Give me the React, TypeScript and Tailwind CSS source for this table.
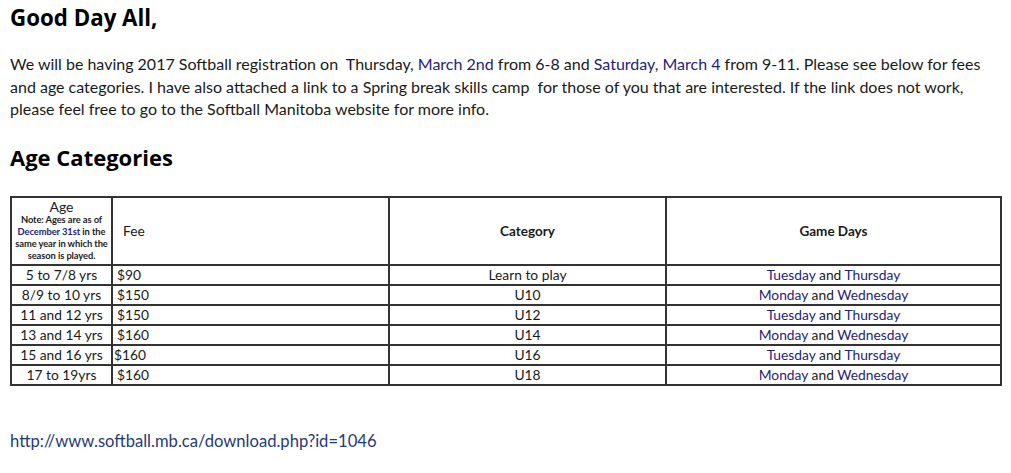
const rows = [
  { age: "5 to 7/8 yrs", fee: "$90", cat: "Learn to play", a: "Tuesday", b: "Thursday", tight: false },
  { age: "8/9 to 10 yrs", fee: "$150", cat: "U10", a: "Monday", b: "Wednesday", tight: false },
  { age: "11 and 12 yrs", fee: "$150", cat: "U12", a: "Tuesday", b: "Thursday", tight: false },
  { age: "13 and 14 yrs", fee: "$160", cat: "U14", a: "Monday", b: "Wednesday", tight: false },
  { age: "15 and 16 yrs", fee: "$160", cat: "U16", a: "Tuesday", b: "Thursday", tight: true },
  { age: "17 to 19yrs", fee: "$160", cat: "U18", a: "Monday", b: "Wednesday", tight: false },
];

const blue = "text-[#25227a]";

export default function App() {
  return (
    <div className="min-h-[473px] bg-white px-[10px] pt-[4px] font-['Lato','Liberation_Sans',sans-serif] text-[#1a1a1a]">
      <h1 className="font-['Open_Sans',sans-serif] text-[22.3px] leading-[28px] font-bold text-black">
        Good Day All,
      </h1>

      <p className="mt-[21px] text-[16px] leading-[22.5px]">
        We will be having 2017 Softball registration on&nbsp; Thursday,{" "}
        <span className={blue}>March 2nd</span> from 6-8 and{" "}
        <span className={blue}>Saturday, March 4</span> from 9-11. Please see below for fees and age
        categories. I have also attached a link to a Spring break skills camp&nbsp; for those of you that
        are interested. If the link does not work, please feel free to go to the Softball Manitoba website
        for more info.
      </p>

      <h2 className="mt-[22px] font-['Open_Sans',sans-serif] text-[22px] leading-[28px] font-bold text-black">
        Age Categories
      </h2>

      <table className="mt-[25px] w-[992px] border-collapse border-2 border-[#333] text-[13.8px] leading-[18px]">
        <colgroup>
          <col className="w-[101px]" />
          <col className="w-[277px]" />
          <col className="w-[277px]" />
          <col />
        </colgroup>
        <thead>
          <tr className="h-[68px]">
            <th className="border-2 border-[#333] p-0 text-center font-normal">
              <div className="text-[14px] leading-[15px]">Age</div>
              <div className="text-[9.4px] leading-[12px] font-bold tracking-[-0.1px] text-[#222]">
                Note: Ages are as of
                <br />
                <span className={blue}>December 31st</span> in the
                <br />
                same year in which the
                <br />
                season is played.
              </div>
            </th>
            <th className="border-2 border-[#333] pl-[10px] text-left font-normal">Fee</th>
            <th className="border-2 border-[#333] text-center text-[13.5px] font-bold">Category</th>
            <th className="border-2 border-[#333] text-center text-[13.5px] font-bold">Game Days</th>
          </tr>
        </thead>
        <tbody>
          {rows.map((r) => (
            <tr key={r.age} className="h-[20px]">
              <td className="border-2 border-[#333] p-0 text-center">{r.age}</td>
              <td className={`border-2 border-[#333] p-0 ${r.tight ? "pl-[1px]" : "pl-[4px]"}`}>{r.fee}</td>
              <td className="border-2 border-[#333] p-0 text-center">{r.cat}</td>
              <td className="border-2 border-[#333] p-0 text-center">
                <span className={blue}>{r.a}</span> and <span className={blue}>{r.b}</span>
              </td>
            </tr>
          ))}
        </tbody>
      </table>

      <a
        href="#"
        className="mt-[44px] block text-[16.6px] leading-[22px] text-[#1f3a78]"
      >
        http://www.softball.mb.ca/download.php?id=1046
      </a>
    </div>
  );
}
